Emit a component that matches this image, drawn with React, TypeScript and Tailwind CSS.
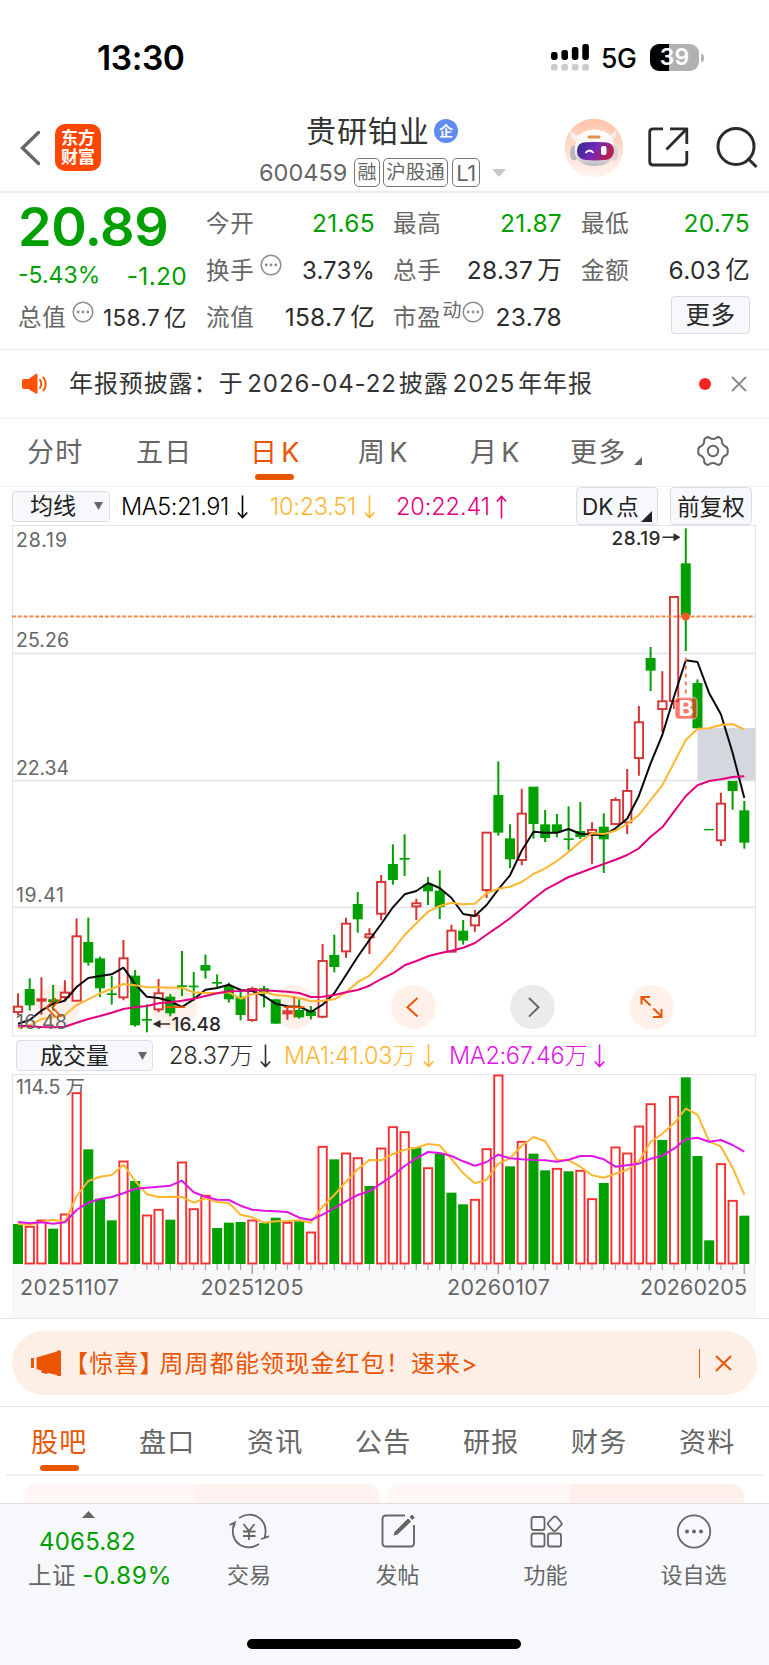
import type { ReactNode } from 'react';

type Candle = [0 | 1, number, number, number, number];

const STEP = 11.715;
const X0 = 18;
const cx = (i: number) => X0 + i * STEP;

// [rising, high, bodyTop, bodyBottom, low], thirds of a pixel from y=800 / y=640
const EARLY: Candle[] = [
  [1, 580, 619, 637, 645], [0, 535, 567, 616, 632], [1, 532, 597, 603, 644], [0, 555, 598, 606, 632],
  [1, 541, 577, 592, 600], [1, 355, 408, 603, 603], [0, 353, 426, 488, 497], [0, 470, 475, 565, 591],
  [0, 528, 580, 585, 614], [1, 420, 474, 593, 601], [0, 510, 527, 676, 680], [0, 613, 657, 662, 697],
  [1, 537, 579, 629, 637], [0, 582, 590, 640, 649], [0, 453, 556, 561, 588], [0, 516, 557, 562, 602],
  [0, 464, 495, 512, 536], [0, 523, 546, 551, 562], [0, 548, 558, 598, 608], [0, 575, 590, 645, 661],
  [1, 560, 566, 661, 665], [0, 558, 565, 580, 622], [0, 597, 598, 671, 671], [1, 620, 633, 641, 659],
  [0, 598, 630, 652, 656], [0, 618, 633, 648, 658], [1, 432, 482, 651, 655], [0, 404, 465, 501, 517],
  [1, 353, 370, 455, 474], [0, 276, 312, 358, 398], [1, 385, 402, 413, 462], [1, 225, 245, 342, 361],
];
const LATE: Candle[] = [
  [0, 613, 672, 720, 734], [0, 583, 654, 659, 708], [1, 776, 789, 800, 840], [0, 711, 733, 754, 795],
  [0, 691, 752, 801, 837], [1, 854, 871, 936, 936], [0, 840, 872, 902, 914], [1, 810, 826, 857, 875],
  [1, 577, 577, 751, 774], [0, 364, 465, 578, 587], [0, 553, 595, 658, 684], [1, 446, 520, 661, 676],
  [0, 440, 440, 552, 596], [0, 510, 553, 594, 606], [0, 522, 553, 577, 592], [0, 499, 595, 600, 631],
  [0, 486, 573, 591, 597], [1, 547, 569, 580, 671], [0, 520, 560, 598, 699], [1, 472, 479, 553, 553],
  [1, 387, 452, 548, 583], [1, 198, 246, 355, 407], [0, 21, 54, 92, 153], [1, 94, 183, 208, 276],
  [1, -130, -130, 184, 207], [0, -335, -230, -74, 33], [0, 118, 129, 265, 265], [0, 567, 567, 571, 571],
  [1, 458, 490, 602, 618], [0, 423, 423, 453, 509], [0, 483, 511, 608, 626],
];
const CANDLES = [
  ...EARLY.map(([r, ...v]) => ({ up: r === 1, v: v.map((n) => 800 + n / 3) })),
  ...LATE.map(([r, ...v]) => ({ up: r === 1, v: v.map((n) => 640 + n / 3) })),
];

const VOL_A = [462, 469, 450, 476, 432, 68, 238, 386, 451, 273, 333, 435, 418, 449, 276, 416, 376, 474, 458, 456, 450, 459, 443, 457, 453, 486, 229, 268, 249, 263, 348, 234];
const VOL_B = [260, 275, 322, 383, 341, 458, 493, 478, 326, 105, 379, 304, 341, 391, 385, 394, 391, 476, 429, 321, 339, 258, 191, 300, 169, 112, 348, 601, 371, 481, 527];
const VOLS = [...VOL_A.map((n) => 1070 + n / 3), ...VOL_B.map((n) => 1040 + n / 3)];
const RISING = [1, 2, 4, 5, 9, 11, 12, 14, 15, 16, 20, 23, 25, 26, 28, 29, 31, 32, 33, 35, 39, 40, 41, 43, 46, 48, 49, 51, 52, 53, 54, 56, 60, 61];

const line = (a: number[], ay: number, b: number[], by: number) =>
  [...a.map((n) => ay + n / 3), ...b.map((n) => by + n / 3)].map((y, i) => `${cx(i).toFixed(1)},${y.toFixed(1)}`).join(' ');

const MA5 = line(
  [671, 660, 632, 611, 602, 561, 534, 528, 523, 503, 553, 590, 594, 604, 621, 598, 569, 564, 554, 570, 573, 588, 611, 619, 620, 636, 614, 580, 525, 470, 420, 372], 800,
  [802, 763, 753, 729, 744, 774, 822, 828, 795, 748, 706, 632, 575, 578, 578, 567, 581, 584, 585, 565, 536, 467, 370, 285, 170, 61, 66, 160, 223, 338, 474], 640);
const MA10 = line(
  [684, 676, 657, 652, 645, 615, 598, 580, 566, 552, 556, 562, 562, 563, 563, 577, 579, 579, 577, 596, 583, 577, 585, 588, 594, 604, 602, 598, 577, 546, 527, 490], 800,
  [930, 885, 850, 815, 798, 788, 793, 791, 760, 746, 740, 726, 702, 685, 663, 636, 605, 580, 582, 572, 552, 525, 480, 436, 368, 300, 266, 265, 255, 252, 268], 640);
const MA20 = line(
  [677, 679, 681, 682, 680, 668, 657, 648, 638, 627, 622, 618, 610, 607, 602, 596, 588, 580, 574, 573, 571, 571, 573, 575, 579, 591, 590, 585, 577, 570, 557, 537], 800,
  [1000, 976, 963, 949, 940, 932, 923, 909, 884, 860, 835, 806, 776, 749, 730, 711, 698, 685, 672, 659, 645, 625, 590, 562, 515, 468, 436, 423, 418, 411, 409], 640);
const VMA1 = line(
  [462, 464, 455, 449, 456, 378, 333, 320, 315, 284, 333, 373, 381, 380, 381, 398, 385, 396, 399, 434, 442, 458, 454, 453, 451, 458, 410, 375, 335, 298, 270, 271], 1070,
  [342, 329, 323, 312, 316, 357, 400, 430, 419, 371, 355, 317, 291, 304, 359, 361, 380, 406, 413, 401, 389, 364, 306, 281, 250, 206, 224, 304, 320, 383, 464], 1040);
const VMA2 = line(
  [456, 460, 457, 461, 457, 420, 398, 387, 381, 370, 356, 353, 350, 347, 332, 367, 380, 389, 390, 407, 419, 422, 424, 426, 443, 450, 434, 414, 394, 375, 364, 340], 1070,
  [407, 378, 355, 336, 339, 348, 364, 377, 366, 344, 355, 358, 360, 361, 365, 359, 348, 348, 358, 380, 376, 371, 356, 347, 326, 298, 293, 305, 300, 315, 335], 1040);

function StatusBar() {
  return (
    <div className="flex h-[103px] items-start pl-[97px] pt-[40px]">
      <div className="w-[454px] text-[33.5px] font-semibold leading-[36px] tracking-[-0.4px] text-black">13:30</div>
      <svg className="mt-[3px]" width="38" height="28" viewBox="0 0 38 28">
        {[[0, 9, 8], [10.4, 7, 10], [20.8, 4, 13], [31.3, 1, 16]].map(([x, y, h]) => (
          <rect key={x} x={x} y={y} width="6.6" height={h} rx="2.4" fill="#000" />
        ))}
        {[0, 10.4, 20.8, 31.3].map((x) => <rect key={x} x={x} y="21" width="6.6" height="6.6" rx="2.2" fill="#cbcbcb" />)}
      </svg>
      <div className="ml-[12px] w-[49px] text-[26.5px] font-medium leading-[37px] tracking-[-0.4px] text-black">5G</div>
      <div className="mt-[4px] flex items-center">
        <div className="flex h-[27px] w-[49px] items-center justify-center rounded-[9px] bg-[linear-gradient(90deg,#000_39%,#b1b1b1_39%)] text-[23px] font-semibold leading-none text-white">39</div>
        <div className="ml-[1.5px] h-[8px] w-[3px] rounded-r-full bg-[#b5b5b5]" />
      </div>
    </div>
  );
}

function Tag({ className, children }: { className: string; children: ReactNode }) {
  return <div className={`flex h-[29px] items-center justify-center rounded-[5px] border border-[#777] leading-none text-[#666] ${className}`}>{children}</div>;
}

function Robot() {
  return (
    <svg width="60" height="60" viewBox="0 0 60 60">
      <defs>
        <linearGradient id="halo" x1="0" y1="0" x2="0" y2="1"><stop stopColor="#ffc4a8" /><stop offset="1" stopColor="#fff5ef" /></linearGradient>
        <linearGradient id="visor" x1="0" y1="0" x2="1" y2="0.3"><stop stopColor="#2c2a8c" /><stop offset=".55" stopColor="#7429b8" /><stop offset="1" stopColor="#b8204f" /></linearGradient>
        <linearGradient id="shell" x1="0" y1="0" x2="0" y2="1"><stop stopColor="#fff" /><stop offset=".6" stopColor="#f3f0f2" /><stop offset="1" stopColor="#bdbac2" /></linearGradient>
      </defs>
      <circle cx="30" cy="30" r="29.3" fill="url(#halo)" />
      <path d="M6.500 11.500q-2 8 5 11.500l5-6q-7 .5-10-5.500zM52 11.500q2 8-5 11.500l-5-6q7 .5 10-5.500z" fill="#f6efee" />
      <ellipse cx="10" cy="35" rx="4" ry="7.500" fill="#b9b7be" />
      <ellipse cx="50" cy="35" rx="4" ry="7.500" fill="#d6d3da" />
      <path d="M11 36Q9 12 30.500 11.500 52 12 50 36q-3 12-19.500 12T11 36z" fill="url(#shell)" />
      <path d="M13 33q0-8.500 9-8.700 8.500-.6 18 0 10 .2 10 8.200 0 9-9 9.500-10 .8-19 0-9-.8-9-9z" fill="url(#visor)" />
      <path d="M21.500 35q4-5 8 0" fill="none" stroke="#fff" strokeWidth="2" />
      <rect x="37" y="28" width="5.500" height="9" rx="2" fill="#fff" />
      <rect x="23.500" y="17.500" width="13" height="3" rx="1.500" fill="#e2904c" />
    </svg>
  );
}

function Header() {
  return (
    <div className="flex h-[90px] border-b-2 border-[#ededed]">
      <svg className="ml-[18px] mt-[25px]" width="24" height="40" viewBox="0 0 24 40"><path d="M20.500 4.500L4.500 20l16 15.500" fill="none" stroke="#666" strokeWidth="3.400" strokeLinecap="round" strokeLinejoin="miter" /></svg>
      <div className="ml-[13px] mt-[21px] flex h-[47px] w-[46px] flex-col items-center justify-center rounded-[10px] bg-[#ff4703] text-[17px] font-bold leading-[19px] text-white">
        <span>东方</span><span>财富</span>
      </div>
      <div className="ml-[158px] w-[305px]">
        <div className="ml-[47px] flex h-[56px] items-center">
          <span className="w-[128px] text-[30px] leading-none tracking-[0.9px] text-[#333]">贵研铂业</span>
          <span className="flex size-[24px] items-center justify-center rounded-full bg-[#5f8cee] text-[14px] font-bold leading-none text-white">企</span>
        </div>
        <div className="flex h-[27px] items-center">
          <span className="w-[95px] text-[23.5px] leading-none text-[#666]">600459</span>
          <Tag className="w-[26px] text-[19px]">融</Tag>
          <Tag className="ml-[3px] w-[65px] text-[19.5px]">沪股通</Tag>
          <Tag className="ml-[4px] w-[28px] text-[22px] tracking-[-0.5px]">L1</Tag>
          <svg className="ml-[12px]" width="14" height="8" viewBox="0 0 14 8"><path d="M0 0h14L7 8z" fill="#c8c8c8" /></svg>
        </div>
      </div>
      <div className="mt-[15px]"><Robot /></div>
      <svg className="ml-[22px] mt-[22px]" width="44" height="44" viewBox="0 0 44 44" fill="none" stroke="#2b2b2b" strokeWidth="2.800" strokeLinejoin="round">
        <path d="M17 3.800H7Q3.700 3.800 3.700 7v29.500Q3.700 40 7 40h30.300Q40.800 40 40.800 36.500V26M24 3.800h16.800V19M40.800 3.800L20.500 24.500" />
      </svg>
      <svg className="ml-[25px] mt-[22px]" width="44" height="44" viewBox="0 0 44 44" fill="none" stroke="#2b2b2b" strokeWidth="3">
        <circle cx="21" cy="21.500" r="18" /><path d="M32.500 33l9 9" />
      </svg>
    </div>
  );
}

const Dots = ({ className = '' }: { className?: string }) => (
  <svg className={className} width="22" height="22" viewBox="0 0 22 22">
    <circle cx="11" cy="11" r="9.800" fill="none" stroke="#8c8c8c" strokeWidth="1.500" />
    <circle cx="6.200" cy="11" r="1.400" fill="#8c8c8c" /><circle cx="11" cy="11" r="1.400" fill="#8c8c8c" /><circle cx="15.800" cy="11" r="1.400" fill="#8c8c8c" />
  </svg>
);

function Cell({ label, value, green, icon }: { label: string; value: ReactNode; green?: boolean; icon?: ReactNode }) {
  return (
    <div className="flex h-[47px] items-center justify-between text-[24.5px] leading-none tracking-[0.3px]">
      <span className="flex items-center text-[23.5px] tracking-[0.7px] text-[#666]">{label}{icon}</span>
      <span className={green ? 'text-[#00a000]' : 'text-[#2b2b2b]'}>{value}</span>
    </div>
  );
}

function Quote() {
  return (
    <div className="flex h-[157px] border-b border-[#ededed] pl-[18px]">
      <div className="w-[169px]">
        <div className="h-[62px] pt-[4px] text-[54px] font-semibold leading-[60px] tracking-[-0.500px] text-[#00a000]">20.89</div>
        <div className="flex h-[40px] items-center justify-between text-[23px] leading-none text-[#00a000]"><span>-5.43%</span><span className="pt-[2px] text-[24.5px] tracking-[0.3px]">-1.20</span></div>
        <div className="flex h-[45px] items-center justify-between leading-none">
          <span className="flex items-center text-[23.5px] tracking-[0.7px] text-[#666]">总值<Dots className="mb-[11px] ml-[6px]" /></span>
          <span className="pt-[2px] text-[22.5px] tracking-[0.4px] text-[#2b2b2b]">158.7<span className="ml-[4px]">亿</span></span>
        </div>
      </div>
      <div className="ml-[19px] w-[169px] pt-[7px]">
        <Cell label="今开" value="21.65" green />
        <Cell label="换手" value={<span className="text-[24px] tracking-[0.1px]">3.73%</span>} icon={<Dots className="mb-[11px] ml-[6px]" />} />
        <Cell label="流值" value={<>158.7<span className="ml-[4px]">亿</span></>} />
      </div>
      <div className="ml-[18px] w-[169px] pt-[7px]">
        <Cell label="最高" value="21.87" green />
        <Cell label="总手" value={<>28.37<span className="ml-[4px]">万</span></>} />
        <Cell label="市盈" value="23.78" icon={<><span className="mb-[14px] ml-[1px] text-[19px] tracking-normal">动</span><Dots className="mb-[11px] ml-[1px]" /></>} />
      </div>
      <div className="ml-[19px] w-[169px] pt-[7px]">
        <Cell label="最低" value="20.75" green />
        <Cell label="金额" value={<>6.03<span className="ml-[4px]">亿</span></>} />
        <div className="ml-auto mt-[2px] flex h-[38px] w-[79px] items-center justify-center rounded-[4px] border border-[#d9dbe2] bg-[#f7f8fb] pt-[1px] text-[24.5px] leading-none tracking-[0.6px] text-[#2b2b2b]">更多</div>
      </div>
    </div>
  );
}

function Notice() {
  return (
    <div className="flex h-[69px] items-center border-b-2 border-[#f6f6f6] text-[#333]">
      <svg className="ml-[21px]" width="28" height="22" viewBox="0 0 28 22">
        <path d="M1 8q0-2 2-2h4.500L15 .8q1.500-.5 1.500 1v18q0 1.500-1.500 1L7.500 16H3q-2 0-2-2z" fill="#ff5208" />
        <path d="M19 7q2.500 4 0 8M22.500 4.500q4.500 6.500 0 13" fill="none" stroke="#ff5208" strokeWidth="1.900" strokeLinecap="round" />
      </svg>
      <div className="ml-[20px] w-[560px] whitespace-nowrap text-[24px] leading-none tracking-[0.9px]">年报预披露：于<span className="ml-[4px] mr-[2px]">2026-04-22</span>披露<span className="ml-[4px] mr-[3px]">2025</span>年年报</div>
      <div className="ml-[70px] size-[12px] rounded-full bg-[#fa2323]" />
      <svg className="ml-[20px]" width="16" height="16" viewBox="0 0 16 16"><path d="M1 1l14 14M15 1L1 15" stroke="#8c8c8c" strokeWidth="1.900" /></svg>
    </div>
  );
}

function PeriodTabs() {
  const items = [
    { t: '五日', w: 'w-[114px]' },
    { t: '日', w: 'w-[108px] text-[#ea5504]' },
    { t: '周', w: 'w-[112px]' },
    { t: '月', w: 'w-[100px]' },
  ];
  return (
    <div className="flex h-[68px] border-b border-[#efefef] pt-[20px] text-[27px] leading-none tracking-[1.300px] text-[#666]">
      <div className="ml-[27px] w-[109px]">分时</div>
      {items.map(({ t, w }) => (
        <div key={t} className={w}>
          {t}{t !== '五日' && <span className="ml-[3px]">K</span>}
          {t === '日' && <div className="ml-[5px] mt-[8px] h-[6px] w-[39px] rounded-full bg-[#ea5504]" />}
        </div>
      ))}
      <div className="flex w-[127px]">更多<svg className="ml-[7px] mt-[18px]" width="8" height="8" viewBox="0 0 8 8"><path d="M8 0v8H0z" fill="#666" /></svg></div>
      <svg className="-mt-[4px]" width="32" height="32" viewBox="0 0 32 32" fill="none" stroke="#666" strokeWidth="2">
        <path d="M9.300 2.600Q11 1.500 12.600 2.900q3.400 2.200 6.800 0Q21 1.500 22.700 2.600 25 3.800 24.800 6q.2 4 3.700 5.500 2.300 1 2.200 3.300v2.400q.1 2.300-2.200 3.300-3.500 1.500-3.700 5.500.2 2.200-2.100 3.400-1.700 1.100-3.300-.3-3.400-2.200-6.800 0-1.600 1.400-3.300.3Q7 28.200 7.200 26 7 22 3.500 20.500 1.200 19.500 1.300 17.200v-2.400Q1.200 12.500 3.500 11.500 7 10 7.200 6 7 3.800 9.300 2.600z" strokeLinejoin="round" />
        <circle cx="16" cy="16" r="5.200" />
      </svg>
    </div>
  );
}

const Down = ({ up, className = 'ml-[8px]' }: { up?: boolean; className?: string }) => (
  <svg className={className} width="11" height="24" viewBox="0 0 11 24">
    <path d={up ? 'M5.500 23.500V1.500M.800 6.500l4.700-5 4.700 5' : 'M5.500 .5v22M.800 17.500l4.700 5 4.700-5'} fill="none" stroke="currentColor" strokeWidth="1.600" />
  </svg>
);

function Indicators() {
  return (
    <div className="flex h-[38px] items-center pl-[12px] text-[23.5px] leading-none">
      <div className="flex h-[31px] w-[98px] items-center rounded-[4px] border border-[#dcdee5] bg-[#f7f8fb] pl-[17px] text-[23px] text-[#222]">均线
        <svg className="ml-[18px]" width="9" height="8" viewBox="0 0 9 8"><path d="M0 0h9L4.500 8z" fill="#666" /></svg>
      </div>
      <div className="ml-[11px] flex w-[149px] items-center pt-[1px] font-light tracking-[-0.35px] text-black">MA5:21.91<Down /></div>
      <div className="flex w-[126px] items-center pt-[1px] font-light tracking-[-0.25px] text-[#ffb631]">10:23.51<Down /></div>
      <div className="flex w-[180px] items-center pt-[1px] font-light tracking-[-0.1px] text-[#e3007f]">20:22.41<Down up className="ml-[6px]" /></div>
      <div className="flex h-[38px] w-[82px] items-center rounded-[4px] border border-[#dcdee5] bg-[#f7f8fb] pl-[5px] pt-[2px] text-[22.5px] text-[#222]">DK<span className="ml-[3px]">点</span>
        <svg className="ml-[2px] mt-[18px]" width="11" height="11" viewBox="0 0 11 11"><path d="M11 0v11H0z" fill="#222" /></svg>
      </div>
      <div className="ml-[12px] flex h-[38px] w-[82px] items-center justify-center rounded-[4px] border border-[#dcdee5] bg-[#f7f8fb] pt-[2px] text-[22.5px] text-[#222]">前复权</div>
    </div>
  );
}

function KLine() {
  return (
    <svg className="block" width="769" height="512" viewBox="0 525 769 512" fill="none">
      <path d="M12.500 1036V525.500H755.500V1036M12 1036H756" stroke="#e3e4e9" strokeWidth="1.200" />
      <path d="M12 653.500H756M12 780.500H756M12 907.500H756" stroke="#dfe3ea" strokeWidth="1.500" />
      <rect x="697.500" y="728" width="58" height="52.500" fill="#d4d7dd" />
      {[57, 175, 294, 413.500, 651.500].map((x) => <circle key={x} cx={x} cy="1007" r="22.300" fill="#fff1ea" />)}
      <circle cx="532.500" cy="1007" r="22.300" fill="#ebebeb" />
      {CANDLES.map(({ up, v: [h, t, b, l] }, i) => {
        const x = cx(i);
        return up ? (
          <g key={i} stroke="#d63333">
            <path d={`M${x} ${h}V${t}M${x} ${b}V${l}`} strokeWidth="2" />
            <rect x={x - 4.100} y={t + 0.3} width="8.300" height={Math.max(b - t - 0.6, 1)} strokeWidth="1.900" fill={i === 2 ? '#d63333' : '#fff'} />
          </g>
        ) : (
          <g key={i} fill="#00a000">
            {h < t && <rect x={x - 1} y={h} width="2" height={l - h} />}
            {h >= t && l > b && <rect x={x - 1} y={b} width="2" height={l - b} />}
            <rect x={x - 5} y={t} width="10" height={b - t} />
          </g>
        );
      })}
      <path d="M12 616.500H755" stroke="#f58a4c" strokeWidth="2" strokeDasharray="4 1.800" />
      <circle cx={cx(57)} cy="616.500" r="4" fill="#ee5a24" />
      <polyline points={MA5} stroke="#0a0a0a" strokeWidth="2" strokeLinejoin="round" />
      <polyline points={MA10} stroke="#ffb631" strokeWidth="2" strokeLinejoin="round" />
      <polyline points={MA20} stroke="#e3007f" strokeWidth="2" strokeLinejoin="round" />
      <path d={`M${cx(57)} 657.500V694`} stroke="#ff6a55" strokeWidth="1.800" strokeDasharray="4 4" />
      <rect x="675" y="697.500" width="22" height="21.500" rx="4" fill="#fb3b22" fillOpacity=".68" stroke="#fff" strokeOpacity=".45" strokeWidth="1.500" />
      <text x="678.500" y="716" fontSize="21" fontWeight="700" fill="#fff" textLength="15" lengthAdjust="spacingAndGlyphs">B</text>
      <g fill="#666" fontSize="19.500">
        <text x="16" y="547" textLength="51">28.19</text>
        <text x="16" y="647" textLength="53">25.26</text>
        <text x="16" y="774.500" textLength="53">22.34</text>
        <text x="16" y="901.500" textLength="48">19.41</text>
        <text x="16" y="1028.500" textLength="51">16.48</text>
      </g>
      <g fill="#2b2b2b" fontSize="19" fontWeight="500">
        <text x="611.500" y="544.500" textLength="49">28.19</text>
        <text x="171.500" y="1030.500" textLength="49.500">16.48</text>
        <path d="M680.500 537.300l-7-4v8zM152.500 1024l8-4v8z" />
      </g>
      <path d="M662.500 537.300H676M157 1024H170" stroke="#2b2b2b" strokeWidth="1.600" />
      <g stroke="#ea5504" strokeWidth="2">
        <path d="M55.500 998l-9 9.500 9 9.500M61.500 998l-9 9.500 9 9.500M165 1007.200h20M284 1007.200h20.500M294.200 996.500v21" strokeWidth="1.800" />
        <path d="M417.500 998l-10 9.300 10 9.300M641.500 1004.500V997h8.500M642 997.500l8.500 8M653.500 1008.500l8 8M661.500 1009v8h-8.500" />
      </g>
      <path d="M529 998l9.500 9.300-9.500 9.300" stroke="#666" strokeWidth="2" />
    </svg>
  );
}

function VolumeHead() {
  return (
    <div className="flex h-[37px] items-center pl-[16px] text-[23.5px] leading-none">
      <div className="flex h-[31px] w-[137px] items-center rounded-[4px] border border-[#dcdee5] bg-[#f7f8fb] pl-[23px] pt-[1px] text-[23px] text-[#222]">成交量
        <svg className="ml-[29px]" width="9" height="8" viewBox="0 0 9 8"><path d="M0 0h9L4.500 8z" fill="#666" /></svg>
      </div>
      <div className="ml-[16px] flex w-[115px] items-center pt-[1px] font-light tracking-[-0.2px] text-[#2b2b2b]">28.37万<Down className="ml-[7px]" /></div>
      <div className="flex w-[165px] items-center pt-[1px] font-light tracking-[-0.25px] text-[#ffb631]">MA1:41.03万<Down className="ml-[7px]" /></div>
      <div className="flex items-center pt-[1px] font-light tracking-[-0.3px] text-[#e016e6]">MA2:67.46万<Down className="ml-[7px]" /></div>
    </div>
  );
}

function Volume() {
  return (
    <svg className="block" width="769" height="245" viewBox="0 1074 769 245" fill="none">
      <rect x="12" y="1264" width="744" height="54" fill="#f8f8fb" />
      <path d="M12.500 1264V1074.500H755.500V1264" stroke="#e3e4e9" strokeWidth="1.200" />
      <path d="M0 1318.500H769" stroke="#e3e4e9" />
      <text x="16" y="1093.500" fontSize="19.500" fill="#666" textLength="69">114.5 万</text>
      {VOLS.map((y, i) => RISING.includes(i)
        ? <rect key={i} x={cx(i) - 4.100} y={y + 0.5} width="8.300" height={1263 - y} stroke="#fa2f2f" strokeWidth="1.900" fill="#fff" />
        : <rect key={i} x={cx(i) - 5} y={y} width="10" height={1264 - y} fill="#00a000" />)}
      {VOLS.map((_, i) => i > 9 && (
        <path key={i} d={`M${cx(i)} 1264v${i === 20 || i === 41 || i === 62 ? 10 : 6}`} stroke={i === 10 ? '#e2e2e5' : '#a9a9ab'} strokeWidth={i === 20 || i === 41 || i === 62 ? 1.600 : 1.200} />
      ))}
      <polyline points={VMA1} stroke="#ffb631" strokeWidth="2" strokeLinejoin="round" />
      <polyline points={VMA2} stroke="#e016e6" strokeWidth="2" strokeLinejoin="round" />
      <g fill="#666" fontSize="21.500">
        <text x="20" y="1295" textLength="99">20251107</text>
        <text x="200.500" y="1295" textLength="103">20251205</text>
        <text x="447" y="1295" textLength="103">20260107</text>
        <text x="640" y="1295" textLength="107">20260205</text>
      </g>
    </svg>
  );
}

function Banner() {
  return (
    <div className="h-[88px] border-b border-[#e3e4e9] pt-[12px]">
      <div className="mx-[12px] flex h-[64px] items-center rounded-full bg-[#fdeee6] pl-[19px] text-[#ea5504]">
        <svg className="shrink-0" width="30" height="26" viewBox="0 0 30 26" fill="#ea5504"><path d="M0 8h3v10H0zM5.500 7.500L26 1.500V.5h4v25.500h-4v-1l-9-2q-2 2-4 0h-2.500v-2.500L5.500 19z" /></svg>
        <div className="ml-[3px] flex w-[549px] shrink-0 whitespace-nowrap pt-[1px] text-[24px] leading-none tracking-[1.150px]">
          <span>【惊喜</span>
          <span className="inline-block w-[20px] overflow-hidden">】</span>
          <span>周周都能领现金红包！速来&gt;</span>
        </div>
        <div className="ml-[86px] h-[29px] w-px shrink-0 bg-[#ea5504]" />
        <svg className="ml-[15px] shrink-0" width="17" height="17" viewBox="0 0 17 17"><path d="M1 1l15 14M16 1L1 16" stroke="#ea5504" strokeWidth="2" /></svg>
      </div>
    </div>
  );
}

function SectionTabs() {
  const items = ['股吧', '盘口', '资讯', '公告', '研报', '财务', '资料'];
  return (
    <div className="h-[96px] overflow-hidden">
      <div className="mx-[6px] flex h-[69px] border-b-2 border-[#f0f0f0] pl-[25px] pt-[22px] text-[27px] leading-none tracking-[1.300px] text-[#666]">
        {items.map((t, i) => (
          <div key={t} className={i === 0 ? 'w-[108px] shrink-0 text-[#ea5504]' : 'w-[108px] shrink-0'}>
            {t}{i === 0 && <div className="ml-[9px] mt-[9px] h-[6px] w-[39px] rounded-full bg-[#ea5504]" />}
          </div>
        ))}
      </div>
      <div className="flex gap-[8px] px-[24px] pt-[8px]">
        <div className="h-[30px] w-[356px] rounded-[12px] bg-[linear-gradient(90deg,#fff7f5_48%,#fff2f0_48%)]" />
        <div className="h-[30px] w-[356px] rounded-[12px] bg-[linear-gradient(90deg,#fff7f5_51%,#fff0ee_51%)]" />
      </div>
    </div>
  );
}

function BottomItem({ label, className, children }: { label: string; className: string; children: ReactNode }) {
  return (
    <div className={`flex flex-col items-center pt-[9px] text-[22px] leading-none text-[#666] ${className}`}>
      {children}<span className="mt-[15px]">{label}</span>
    </div>
  );
}

function BottomBar() {
  return (
    <div className="h-[162px] border-t border-[#dcdee3] bg-[#f7f8fb]">
      <div className="flex h-[135px]">
        <div className="w-[176px] leading-none text-[#00a000]">
          <svg className="ml-[82px] mt-[7px]" width="13" height="7" viewBox="0 0 13 7"><path d="M6.500 0L13 7H0z" fill="#666" /></svg>
          <div className="ml-[39px] mt-[12px] text-[24px] tracking-[0.2px]">4065.82</div>
          <div className="ml-[28px] mt-[9px] flex items-center whitespace-nowrap text-[24.5px] tracking-[0.5px]">
            <span className="mr-[6px] text-[23.5px] text-[#666]">上证</span>-0.89%
          </div>
        </div>
        <BottomItem label="交易" className="w-[146px]">
          <svg width="40" height="36" viewBox="0 0 40 36" fill="none" stroke="#666" strokeWidth="1.800">
            <path d="M10 5Q19-1 28 3.500 37.500 9 36.500 20l-.8 5M32 26l3.500-1 5-2M30 31q-9 6-18 1.500Q2.500 27 4 15l1-5M.5 12L6 9.500l-1.500 5M14.500 11l5.500 7 5.500-7M14 18.500h12.500M14 23h12.500M20 18v9" />
          </svg>
        </BottomItem>
        <BottomItem label="发帖" className="w-[151px]">
          <svg width="36" height="36" viewBox="0 0 36 36" fill="none" stroke="#666" strokeWidth="1.900">
            <path d="M25 2.500H6Q2.500 2.500 2.500 6v24q0 3.500 3.500 3.500h24.500q3.500 0 3.500-3.500V12" />
            <path d="M14 22l3.500-1L30.500 8.500 28 6 15 19zM30 4l2.500 2.500L34 4.500Q33 2 31.500 2.500z" fill="#666" strokeWidth="1" />
          </svg>
        </BottomItem>
        <BottomItem label="功能" className="w-[145px]">
          <svg width="36" height="36" viewBox="0 0 36 36" fill="none" stroke="#666" strokeWidth="1.800">
            <rect x="3.500" y="4" width="13" height="13" rx="2" /><rect x="3.500" y="20.500" width="13" height="13" rx="2" /><rect x="20" y="20.500" width="13" height="13" rx="2" />
            <path d="M25.500 4q1.500-1 3 0l4.700 5.500q1 1.500 0 2.500L28 17.500q-1.500 1-3 0L20.300 12q-1-1.200 0-2.500z" />
          </svg>
        </BottomItem>
        <BottomItem label="设自选" className="w-[151px]">
          <svg width="36" height="36" viewBox="0 0 36 36" fill="none" stroke="#666" strokeWidth="1.800">
            <circle cx="18" cy="18.500" r="16.200" /><g fill="#666" stroke="none"><circle cx="11" cy="18.500" r="2" /><circle cx="18" cy="18.500" r="2" /><circle cx="25" cy="18.500" r="2" /></g>
          </svg>
        </BottomItem>
      </div>
      <div className="ml-[247px] h-[10px] w-[274px] rounded-full bg-black" />
    </div>
  );
}

export default function App() {
  return (
    <div className="h-[1665px] w-[769px] overflow-hidden bg-white font-['Inter','Noto_Sans_CJK_SC',sans-serif]">
      <StatusBar />
      <Header />
      <Quote />
      <Notice />
      <PeriodTabs />
      <Indicators />
      <KLine />
      <VolumeHead />
      <Volume />
      <Banner />
      <SectionTabs />
      <BottomBar />
    </div>
  );
}
